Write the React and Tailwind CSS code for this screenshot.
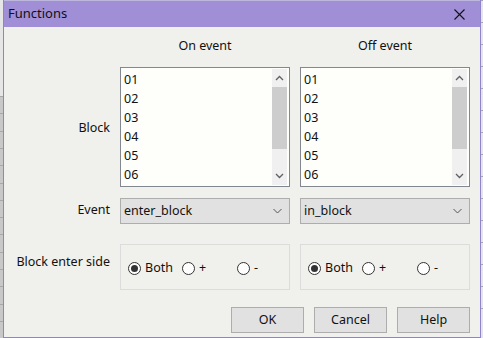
import React from "react";

const font = { fontFamily: '"Noto Sans", "Open Sans", sans-serif' };

function ListBox() {
  const items = ["01", "02", "03", "04", "05", "06"];
  return (
    <div className="w-[170px] h-[120px] border border-[#828790] bg-[#fefefb] flex">
      <div className="flex-1 flex flex-col pt-[2px] pl-[3px]">
        {items.map((it) => (
          <div key={it} className="h-[19px] leading-[19px] text-[12.5px] text-[#111]">
            {it}
          </div>
        ))}
      </div>
      <div className="w-[15px] mr-[2px] my-[1px] bg-[#f0f0f0] flex flex-col items-center">
        <svg width="9" height="17" viewBox="0 0 9 17" className="mt-[1px]">
          <path d="M1 10 L4.5 6.5 L8 10" fill="none" stroke="#606060" strokeWidth="1.3" />
        </svg>
        <div className="w-[15px] h-[62px] bg-[#cdcdcd]" />
        <div className="flex-1" />
        <svg width="9" height="17" viewBox="0 0 9 17" className="mb-[1px]">
          <path d="M1 7 L4.5 10.5 L8 7" fill="none" stroke="#606060" strokeWidth="1.3" />
        </svg>
      </div>
    </div>
  );
}

function Combo({ value }) {
  return (
    <div className="w-[170px] h-[26px] border border-[#adadad] bg-[#e1e1e1] flex items-center pl-[3px] pr-[7px]">
      <span className="flex-1 text-[12.5px] text-[#111]">{value}</span>
      <svg width="9" height="6" viewBox="0 0 9 6">
        <path d="M0.5 1 L4.5 5 L8.5 1" fill="none" stroke="#555" strokeWidth="1" />
      </svg>
    </div>
  );
}

function Radio({ checked, label }) {
  return (
    <div className="flex items-center gap-[4px]">
      <div className="w-[13px] h-[13px] rounded-full border border-[#333] bg-white flex items-center justify-center">
        {checked && <div className="w-[7px] h-[7px] rounded-full bg-[#333]" />}
      </div>
      <span className="text-[12.5px] text-[#111]">{label}</span>
    </div>
  );
}

function Group() {
  return (
    <div className="w-[170px] h-[46px] border border-[#dcdcdc] flex items-center pt-[3px] pl-[7px]">
      <div className="w-[54px]">
        <Radio checked label="Both" />
      </div>
      <div className="w-[55px]">
        <Radio label="+" />
      </div>
      <Radio label="-" />
    </div>
  );
}

function Button({ children }) {
  return (
    <div className="w-[73px] h-[26px] border border-[#adadad] bg-[#e1e1e1] flex items-center justify-center text-[12.5px] text-[#111]">
      {children}
    </div>
  );
}

function Label({ children, className = "" }) {
  return (
    <div className={"w-[106px] text-right text-[12.5px] text-[#111] whitespace-nowrap " + className}>
      {children}
    </div>
  );
}

export default function App() {
  const stripes = Array.from({ length: 14 });
  return (
    <div className="w-[483px] h-[338px] bg-[#f0f0f0] flex overflow-hidden" style={font}>
      <div className="w-[3px] flex flex-col bg-[#e6e6e6]">
        <div className="h-[130px]" />
        {stripes.map((_, i) => (
          <div key={i} className="h-[23px] border-t border-[#a8a8a8] bg-[#c8c8c8]" />
        ))}
      </div>
      <div className="w-[478px] h-[338px] border-x border-b border-[#8f82cf] flex flex-col bg-[#f0f0ec]">
        <div className="h-[1px] bg-[#bdb6dd]" />
        <div className="h-[26px] bg-[#a08fd7] flex items-center pl-[4px] pr-[15px]">
          <span className="flex-1 text-[13px] text-[#111]">Functions</span>
          <svg width="11" height="11" viewBox="0 0 11 11">
            <path d="M0.5 0.5 L10.5 10.5 M10.5 0.5 L0.5 10.5" stroke="#111" strokeWidth="1.1" />
          </svg>
        </div>
        <div className="flex-1 flex flex-col">
          <div className="flex gap-[10px] mt-[11px] h-[17px] items-center">
            <Label />
            <div className="w-[170px] text-center text-[12.5px] text-[#111]">On event</div>
            <div className="w-[170px] text-center text-[12.5px] text-[#111]">Off event</div>
          </div>
          <div className="flex gap-[10px] mt-[12px] items-center">
            <Label className="pt-[2px]">Block</Label>
            <ListBox />
            <ListBox />
          </div>
          <div className="flex gap-[10px] mt-[11px] items-center">
            <Label className="pb-[2px]">Event</Label>
            <Combo value="enter_block" />
            <Combo value="in_block" />
          </div>
          <div className="flex gap-[10px] mt-[20px] items-start">
            <Label className="pt-[9px]">Block enter side</Label>
            <Group />
            <Group />
          </div>
          <div className="flex gap-[10px] mt-[17px] pl-[227px]">
            <Button>OK</Button>
            <Button>Cancel</Button>
            <Button>Help</Button>
          </div>
        </div>
      </div>
      <div className="w-[2px] flex flex-col bg-[#e6e6e6]">
        {Array.from({ length: 15 }).map((_, i) => (
          <div key={i} className="h-[22px] border-t border-[#a8a8a8]" />
        ))}
      </div>
    </div>
  );
}
